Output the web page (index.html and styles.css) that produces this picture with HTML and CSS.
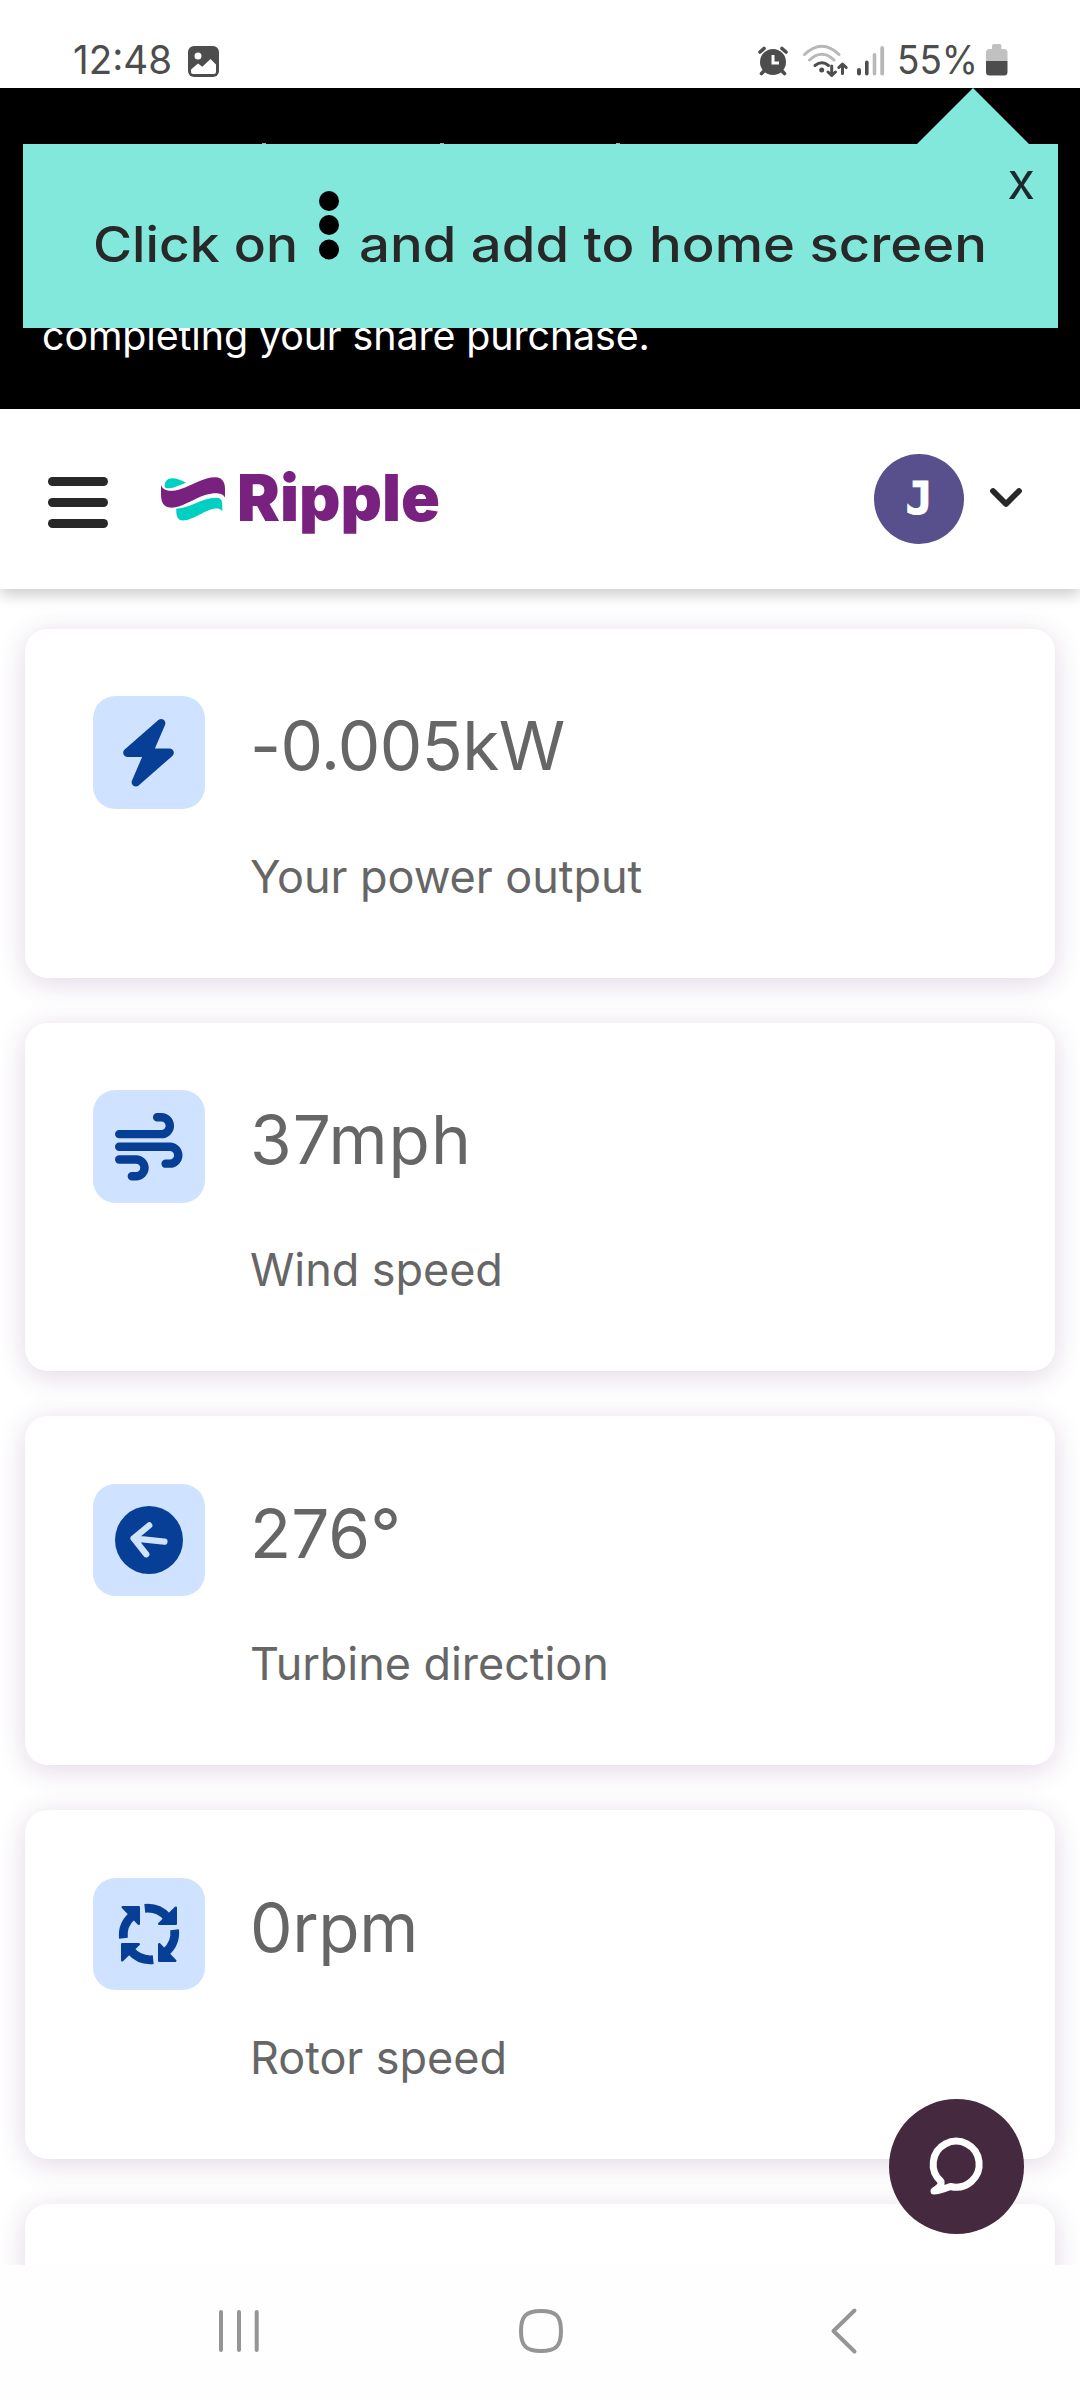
FILE: index.html
```html
<!DOCTYPE html>
<html lang="en">
<head>
<meta charset="utf-8">
<title>Ripple</title>
<link rel="stylesheet" href="styles.css">
</head>
<body>
<div class="screen">
  <header class="status">
    <svg class="clock" width="100" height="54" viewBox="0 0 100 54"><text x="0" y="40" textLength="99" lengthAdjust="spacingAndGlyphs">12:48</text></svg>
    <svg class="photo" width="31" height="31" viewBox="0 0 31 31"><rect width="31" height="31" rx="6" fill="#4d4d4d"/><circle cx="10" cy="10" r="3.500" fill="#fff"/><path d="M3 23.500L10 17.500L14.300 20.700L22.500 13L28 18.500V26Q28 28 26 28H5Q3 28 3 26Z" fill="#fff"/></svg>
    <div class="status-right">
      <svg class="alarm" width="30" height="30" viewBox="0 0 30 30"><circle cx="15" cy="16" r="13" fill="#4d4d4d"/><g stroke="#4d4d4d" stroke-width="3.600" stroke-linecap="round"><path d="M2 6L6 2.500M28 6L24 2.500M6 25L3.500 27.500M24 25L26.500 27.500"/></g><path d="M15 9V17H21" fill="none" stroke="#fff" stroke-width="3"/></svg>
      <svg class="wifi" width="46" height="34" viewBox="0 0 46 34"><g fill="none" stroke-linecap="round" stroke-width="3"><path d="M2.500 10.500Q20 -6 37 10.500M7.500 16Q20 4.500 32 16" stroke="#b8b8b8"/><path d="M13 21.500Q20 16 26.500 21.500" stroke="#4d4d4d"/></g><circle cx="19.700" cy="26" r="2.500" fill="#4d4d4d"/><path d="M29.700 22V31.500M26 28L29.700 31.500L33.500 28M40.500 29.500V20M36.800 23.500L40.500 20L44.200 23.500" fill="none" stroke="#4d4d4d" stroke-width="3" stroke-linecap="round" stroke-linejoin="round"/></svg>
      <svg class="signal" width="28" height="30" viewBox="0 0 28 30"><g fill="#4d4d4d"><rect x="0" y="22" width="4" height="7.500" rx="2"/><rect x="8" y="14.500" width="3.600" height="15" rx="1.800"/></g><g fill="#b8b8b8"><rect x="15.700" y="7" width="3.600" height="22.500" rx="1.800"/><rect x="23.300" y="0" width="3.800" height="29.500" rx="1.900"/></g></svg>
      <svg class="percent" width="88" height="54" viewBox="0 0 88 54"><text x="2" y="40" textLength="81" lengthAdjust="spacingAndGlyphs">55%</text></svg>
      <svg class="battery" width="22" height="32" viewBox="0 0 22 32"><path d="M6 5V2Q6 0 8 0H13.500Q15.500 0 15.500 2V5H18Q21.500 5 21.500 8.500V17H0V8.500Q0 5 3.500 5Z" fill="#c1c1c1"/><path d="M0 17H21.500V28Q21.500 31.500 18 31.500H3.500Q0 31.500 0 28Z" fill="#4d4d4d"/></svg>
    </div>
  </header>

  <section class="banner">
    <p>completing your share purchase.</p>
    <i class="tick t1"></i><i class="tick t2"></i><i class="tick t3"></i>
    <div class="tip">
      <svg class="pointer" width="112" height="56" viewBox="0 0 112 56"><path d="M0 56L56 0L112 56Z" fill="#83e8dc"/></svg>
      <svg class="tip-word" width="208" height="66" viewBox="0 0 208 66"><text x="1" y="50" textLength="205" lengthAdjust="spacingAndGlyphs">Click on</text></svg>
      <svg class="dots" width="20" height="70" viewBox="0 0 20 70"><circle cx="10" cy="10" r="10"/><circle cx="10" cy="34" r="10"/><circle cx="10" cy="58.500" r="10"/></svg>
      <svg class="tip-rest" width="636" height="66" viewBox="0 0 636 66"><text x="2" y="50" textLength="628" lengthAdjust="spacingAndGlyphs">and add to home screen</text></svg>
      <span class="close">x</span>
    </div>
  </section>

  <nav class="topbar">
    <div class="menu"><i></i><i></i><i></i></div>
    <svg class="mark" width="64" height="44" viewBox="161 478 64 44"><path d="M164.700 488C164 478.500 173 476 186 483.800C180 486 175 488.700 170 489.200C167 489.400 165 489 164.700 488Z" fill="#00cfc1"/><path d="M161 486C163.500 492.500 171 493 180 490.300C192 486.500 204 478.300 215.200 478.300C223 478.500 225 484 225 490V498.500C222.500 493.500 214 493.300 206 495.800C194 499.500 182 508.700 171.500 508.700C162.500 508.500 161 502 161 495Z" fill="#78217f"/><path d="M176.300 509.500C188 510.300 201 499.200 216 498.800C221 498.700 222.300 502 222.300 506V512.500C219 506.500 208 511 202 514.500C195 518 188 521.500 183 521.500C177 521.300 176 516 176.300 509.500Z" fill="#00cfc1"/></svg>
    <svg class="brand" width="202" height="80" viewBox="0 0 202 80"><text x="-2" y="61" textLength="203" lengthAdjust="spacingAndGlyphs">Ripple</text></svg>
    <div class="avatar">J</div>
    <svg class="chevron" width="32" height="20" viewBox="0 0 32 20"><path d="M3 3L16 16L29 3" fill="none" stroke="#282828" stroke-width="5.800" stroke-linecap="round" stroke-linejoin="round"/></svg>
  </nav>

  <main class="cards">
    <article class="card power">
      <div class="icon"><svg width="59" height="67.500" viewBox="0 0 448 512"><path d="M349.400 44.600c5.900-13.700 1.500-29.700-10.600-38.500s-28.600-8-39.900 1.800l-256 224c-10 8.800-13.600 22.900-8.900 35.300S50.700 288 64 288H175.500L98.600 467.400c-5.900 13.700-1.500 29.700 10.600 38.500s28.600 8 39.900-1.800l256-224c10-8.800 13.600-22.900 8.900-35.300s-16.600-20.700-30-20.700H272.500L349.400 44.600z" fill="#063f95"/></svg></div>
      <div class="body"><div class="value">-0.005kW</div><div class="label">Your power output</div></div>
    </article>
    <article class="card wind">
      <div class="icon"><svg width="67.500" height="67.500" viewBox="0 0 512 512"><path d="M288 32c0 17.700 14.300 32 32 32h32c17.700 0 32 14.300 32 32s-14.300 32-32 32H32c-17.700 0-32 14.300-32 32s14.300 32 32 32H352c53 0 96-43 96-96s-43-96-96-96H320c-17.700 0-32 14.300-32 32zm64 352c0 17.700 14.300 32 32 32h32c53 0 96-43 96-96s-43-96-96-96H32c-17.700 0-32 14.300-32 32s14.300 32 32 32H416c17.700 0 32 14.300 32 32s-14.300 32-32 32H384c-17.700 0-32 14.300-32 32zM128 512h32c53 0 96-43 96-96s-43-96-96-96H32c-17.700 0-32 14.300-32 32s14.300 32 32 32H160c17.700 0 32 14.300 32 32s-14.300 32-32 32H128c-17.700 0-32 14.300-32 32s14.300 32 32 32z" fill="#063f95"/></svg></div>
      <div class="body"><div class="value">37mph</div><div class="label">Wind speed</div></div>
    </article>
    <article class="card">
      <div class="icon"><svg width="68" height="68" viewBox="-34 -34 68 68"><circle r="34" fill="#063f95"/><path transform="rotate(6)" d="M15.500 0H-15.500M-1.300 -14.500L-15.500 0L-1.300 14.500" fill="none" stroke="#cfe2ff" stroke-width="6.300" stroke-linecap="round" stroke-linejoin="round"/></svg></div>
      <div class="body"><div class="value">276°</div><div class="label">Turbine direction</div></div>
    </article>
    <article class="card rotor">
      <div class="icon"><svg width="64" height="64" viewBox="-32 -32 64 64"><defs><g id="turn"><path d="M-4.200 -25.600A26 26 0 0 1 18 -17" fill="none" stroke="#063f95" stroke-width="8.700"/><path d="M26.800 -26.300V-10.200H10.200Z" fill="#063f95" stroke="#063f95" stroke-width="2.400" stroke-linejoin="round"/></g></defs><use href="#turn"/><use href="#turn" transform="rotate(90)"/><use href="#turn" transform="rotate(180)"/><use href="#turn" transform="rotate(270)"/></svg></div>
      <div class="body"><div class="value">0rpm</div><div class="label">Rotor speed</div></div>
    </article>
    <article class="card"></article>
  </main>

  <footer class="nav">
    <svg width="40" height="44" viewBox="0 0 40 44"><path d="M2 3V41M20 3V41M37.700 3V41" stroke="#959595" stroke-width="4" stroke-linecap="round"/></svg>
    <svg class="home" width="44" height="44" viewBox="0 0 44 44"><path d="M22 2C37 2 42 7 42 22S37 42 22 42S2 37 2 22S7 2 22 2Z" fill="none" stroke="#959595" stroke-width="4"/></svg>
    <svg class="back" width="27" height="46" viewBox="0 0 27 46"><path d="M24.500 2.500L3.500 23L24.500 43.500" fill="none" stroke="#959595" stroke-width="4" stroke-linecap="round" stroke-linejoin="round"/></svg>
  </footer>

  <button class="chat" aria-label="Chat"><svg width="56" height="60" viewBox="0 0 56 60"><path d="M11 44.500A23 23 0 1 1 20.500 49.500C15 51.500 9 54 4 54C7 52 10 49.500 11 47Z" fill="none" stroke="#fff" stroke-width="7" stroke-linejoin="round"/></svg></button>
</div>
</body>
</html>
```
FILE: styles.css
```css
* { box-sizing: border-box; }
body { margin: 0; background: #fff; font-family: Inter, "Liberation Sans", sans-serif; }
svg { display: block; flex: none; overflow: visible; }
.screen { position: relative; width: 1080px; height: 2400px; overflow: hidden; display: flex; flex-direction: column; }

.status { height: 88px; flex: none; display: flex; align-items: flex-start; padding: 34px 72px 0 73px; }
.status text { font-size: 39px; fill: #4d4d4d; }
.photo { margin: 12px 0 0 15px; }
.status-right { display: flex; margin-left: auto; align-items: flex-start; }
.alarm { margin-top: 12px; }
.wifi { margin: 10px 0 0 14px; }
.signal { margin: 12px 0 0 9px; }
.percent { margin-left: 10px; }
.battery { margin: 10px 0 0 3px; }

.banner { position: relative; height: 321px; flex: none; background: #000; color: #fff; display: flex; align-items: flex-end; padding: 0 42px 45px; }
.banner p { margin: 0; font-size: 39.375px; line-height: 56px; letter-spacing: -0.1px; }
.tick { position: absolute; top: 55px; width: 4px; height: 1px; background: #aaa; }
.t1 { left: 262px; }
.t2 { left: 440px; }
.t3 { left: 616px; }
.tip { position: absolute; left: 23px; top: 56px; width: 1035px; height: 184px; background: #83e8dc; display: flex; align-items: flex-start; padding: 47px 0 0 69px; }
.pointer { position: absolute; left: 894px; top: -56px; }
.tip text { font-size: 49px; font-weight: 450; fill: #282828; }
.tip-word { margin-top: 21px; }
.dots { margin: 0 0 0 19px; }
.tip-rest { margin: 21px 0 0 18px; }
.close { position: absolute; right: 23px; top: 10px; font-size: 51px; line-height: 54px; color: #1c2a30; }

.topbar { position: relative; z-index: 1; height: 180px; flex: none; background: #fff; display: flex; align-items: center; padding: 0 58px 0 48px; box-shadow: 0 6px 14px rgba(0,0,0,.2); }
.menu { display: flex; flex-direction: column; gap: 12px; margin-top: 7px; }
.menu i { width: 60px; height: 9px; border-radius: 5px; background: #282828; }
.mark { margin-left: 53px; }
.brand { margin: 2px 0 0 14px; }
.brand text { font-size: 65px; font-weight: 900; fill: #78217f; }
.avatar { margin-left: auto; width: 90px; height: 90px; border-radius: 50%; background: #57508c; color: #fff; font: bold 45px/90px "DejaVu Sans Mono", monospace; text-align: center; -webkit-text-stroke: 1.2px #fff; }
.chevron { margin: -3px 0 0 26px; }

.cards { height: 1676px; flex: none; overflow: hidden; display: flex; flex-direction: column; gap: 45px; padding: 39.9px 25px 0; }
.card { flex: none; height: 348.75px; border-radius: 22.5px; background: #fff; box-shadow: 0 5px 28px rgba(80,20,95,.17); display: flex; gap: 45px; padding: 67.5px; }
.icon { flex: none; width: 112.5px; height: 112.5px; border-radius: 22.5px; background: #cfe2ff; display: flex; align-items: center; justify-content: center; }
.body { color: #666; }
.value { font-size: 67.5px; line-height: 100px; }
.power .value { letter-spacing: -0.6px; }
.wind .value { letter-spacing: 1px; }
.rotor .value { letter-spacing: -0.4px; }
.label { font-size: 45px; line-height: 60px; margin-top: 50.3px; letter-spacing: -0.05px; }

.nav { flex: 1; background: #fefefe; display: flex; align-items: center; padding: 0 223px 3px 219px; }
.home { margin-left: 260px; }
.back { margin-left: auto; }
.chat { position: absolute; left: 889px; top: 2099px; width: 135px; height: 135px; border: 0; border-radius: 50%; background: #45293f; padding: 38px 0 0 41px; display: flex; align-items: flex-start; }
```
